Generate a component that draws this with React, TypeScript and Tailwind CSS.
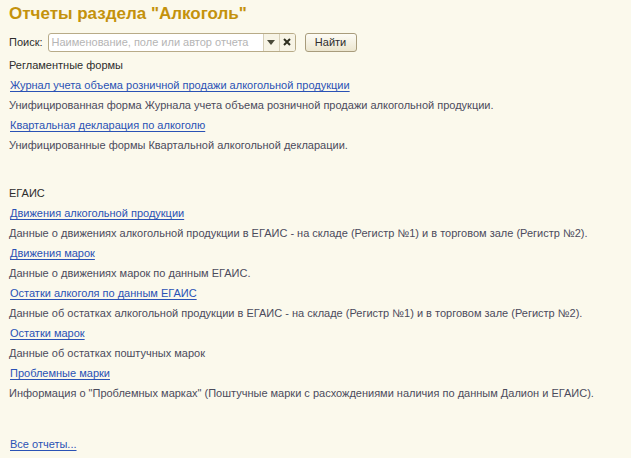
import React from 'react';

const reglament = [
  {
    title: 'Журнал учета объема розничной продажи алкогольной продукции',
    desc: 'Унифицированная форма Журнала учета объема розничной продажи алкогольной продукции.',
  },
  {
    title: 'Квартальная декларация по алкоголю',
    desc: 'Унифицированные формы Квартальной алкогольной декларации.',
  },
];

const egais = [
  {
    title: 'Движения алкогольной продукции',
    desc: 'Данные о движениях алкогольной продукции в ЕГАИС - на складе (Регистр №1) и в торговом зале (Регистр №2).',
  },
  {
    title: 'Движения марок',
    desc: 'Данные о движениях марок по данным ЕГАИС.',
  },
  {
    title: 'Остатки алкоголя по данным ЕГАИС',
    desc: 'Данные об остатках алкогольной продукции в ЕГАИС - на складе (Регистр №1) и в торговом зале (Регистр №2).',
  },
  {
    title: 'Остатки марок',
    desc: 'Данные об остатках поштучных марок',
  },
  {
    title: 'Проблемные марки',
    desc: 'Информация о "Проблемных марках" (Поштучные марки с расхождениями наличия по данным Далион и ЕГАИС).',
  },
];

function ReportItem({ title, desc }: { title: string; desc: string }) {
  return (
    <div className="flex flex-col">
      <div className="h-[21px] flex items-center pl-px">
        <a className="text-[#2a52b5] underline underline-offset-2 decoration-[#2a52b5] cursor-pointer">{title}</a>
      </div>
      <div className="h-[19px] flex items-center text-[#4b4b5c]">{desc}</div>
    </div>
  );
}

function Group({ name, items }: { name: string; items: { title: string; desc: string }[] }) {
  return (
    <div className="flex flex-col">
      <div className="h-[19px] flex items-center text-[#2d2d2d]">{name}</div>
      {items.map((it) => (
        <ReportItem key={it.title} title={it.title} desc={it.desc} />
      ))}
    </div>
  );
}

export default function App() {
  return (
    <div
      className="w-[631px] h-[458px] bg-[#fbf9ec] px-[9px] text-[11px] whitespace-nowrap overflow-hidden"
      style={{ fontFamily: '"Liberation Sans", Arial, sans-serif' }}
    >
      <h1 className="h-[28px] flex items-center text-[17px] font-bold text-[#c4920c]">
        Отчеты раздела "Алкоголь"
      </h1>

      <div className="mt-[5px] h-[18px] flex items-center">
        <span className="text-[#2d2d2d] mr-[5px]">Поиск:</span>
        <div className="w-[248px] h-[19px] flex items-stretch border border-[#b8ab88] rounded-[3px] bg-white overflow-hidden">
          <div className="flex-1 flex items-center px-[3px] text-[#b5b5b5]">
            Наименование, поле или автор отчета
          </div>
          <div className="w-[16px] flex items-center justify-center border-l border-[#d6cfb8] bg-[#f7f4e6]">
            <svg width="8" height="5" viewBox="0 0 8 5">
              <path d="M0 0 L8 0 L4 5 Z" fill="#4a4a3a" />
            </svg>
          </div>
          <div className="w-[16px] flex items-center justify-center border-l border-[#d6cfb8] bg-[#f7f4e6]">
            <svg width="8" height="8" viewBox="0 0 8 8">
              <path d="M1 1 L7 7 M7 1 L1 7" stroke="#2f2f20" strokeWidth="2" />
            </svg>
          </div>
        </div>
        <button className="ml-[9px] w-[52px] h-[19px] flex items-center justify-center rounded-[3px] border border-[#a89c7c] bg-gradient-to-b from-[#fdfcf6] to-[#ece6cf] text-[#2d2d2d]">
          Найти
        </button>
      </div>

      <div className="mt-[5px]">
        <Group name="Регламентные формы" items={reglament} />
      </div>

      <div className="mt-[29px]">
        <Group name="ЕГАИС" items={egais} />
      </div>

      <div className="mt-[31px] h-[21px] flex items-center pl-px">
        <a className="text-[#2a52b5] underline underline-offset-2 cursor-pointer">Все отчеты...</a>
      </div>
    </div>
  );
}
